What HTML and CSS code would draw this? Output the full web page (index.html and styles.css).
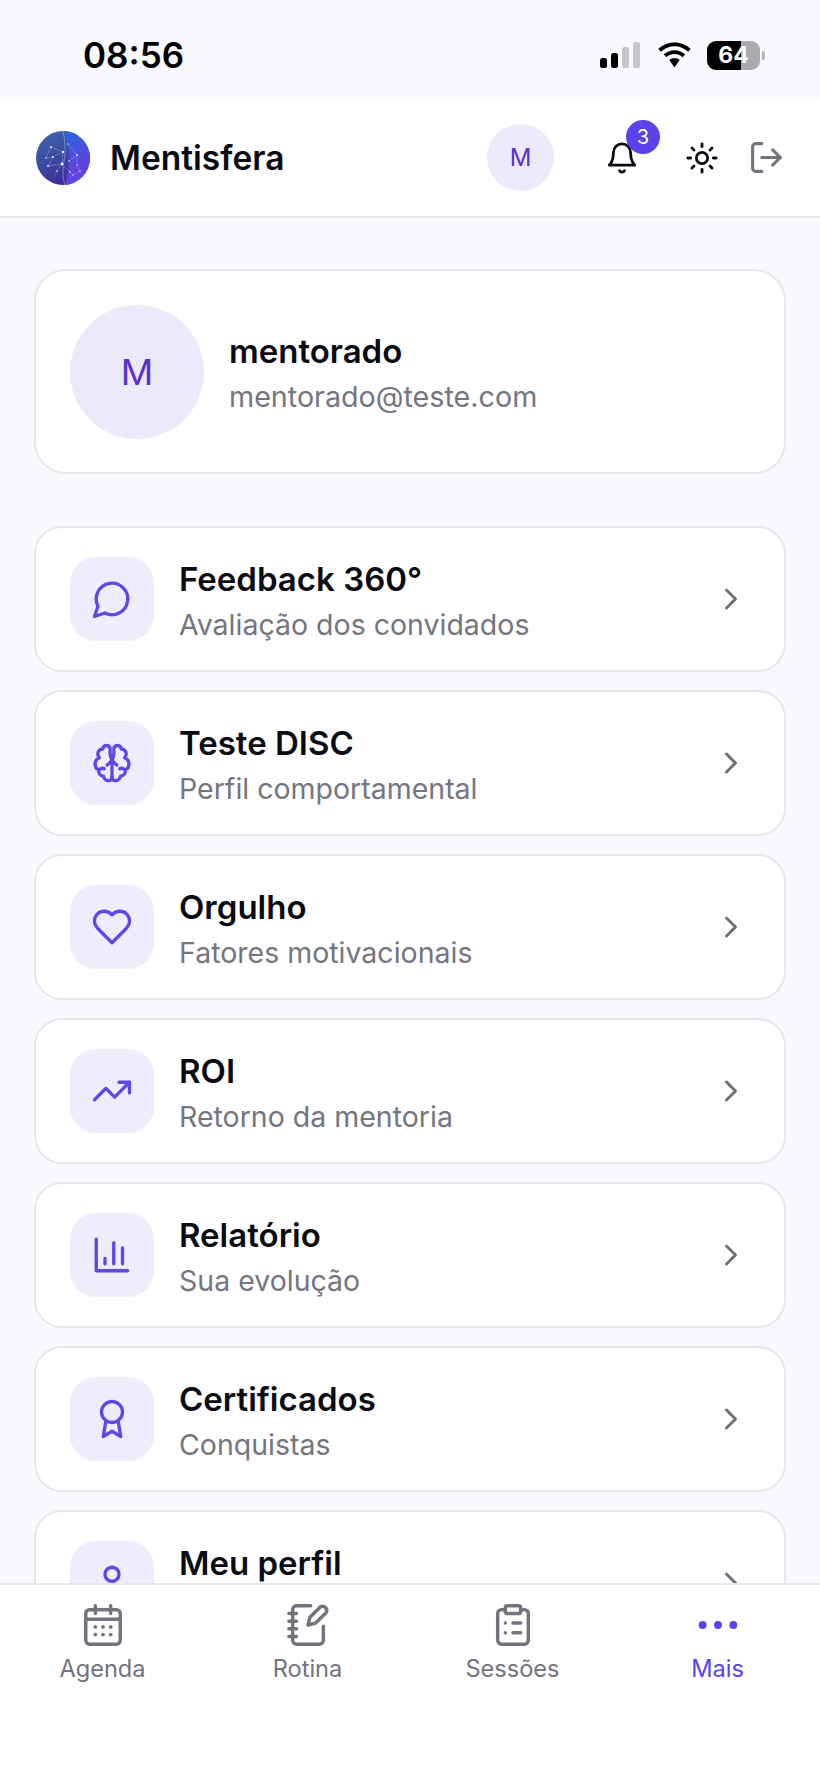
FILE: index.html
```html
<!DOCTYPE html>
<html lang="pt-BR">
<head>
<meta charset="utf-8">
<title>Mentisfera</title>
<link rel="stylesheet" href="styles.css">
</head>
<body>
<div class="app">
  <div class="status-bar">
    <span class="time">08:56</span>
    <div class="status-icons">
      <div class="signal"><i class="bar b1"></i><i class="bar b2"></i><i class="bar b3 off"></i><i class="bar b4 off"></i></div>
      <svg class="wifi" viewBox="0 0 36 26"><path d="M18 4.200c5.300 0 10 2 13.600 5.500L34.200 7C30 2.800 24.300.4 18 .4S6 2.800 1.800 7l2.600 2.700C8 6.200 12.700 4.200 18 4.200Z"/><path d="M18 12c3.100 0 5.900 1.200 8 3.200l2.700-2.700C25.900 9.800 22.100 8.200 18 8.200S10.100 9.800 7.300 12.500l2.700 2.700c2.100-2 4.900-3.200 8-3.200Z"/><path d="M18 16c-2 0-3.800.8-5.200 2.100L18 25.600l5.200-7.500C21.800 16.800 20 16 18 16Z"/></svg>
      <div class="battery"><span class="battery-level">64</span></div>
      <i class="battery-nub"></i>
    </div>
  </div>

  <header class="topbar">
    <svg class="logo" viewBox="0 0 54 54">
      <defs>
        <linearGradient id="lg1" x1="0.1" y1="0" x2="0.7" y2="1"><stop offset="0" stop-color="#4068ac"/><stop offset="0.55" stop-color="#3b44a0"/><stop offset="1" stop-color="#42209c"/></linearGradient>
        <linearGradient id="lg2" x1="0.4" y1="0" x2="0.6" y2="1"><stop offset="0" stop-color="#2c62e0"/><stop offset="0.6" stop-color="#5a45dc"/><stop offset="1" stop-color="#6e3fe0"/></linearGradient>
        <clipPath id="lc"><circle cx="27" cy="27" r="27"/></clipPath>
      </defs>
      <g clip-path="url(#lc)">
        <rect width="54" height="54" fill="url(#lg1)"/>
        <path d="M28 0C32 12 34 22 33 32C32 42 30 48 30 54H54V0Z" fill="url(#lg2)"/>
        <path d="M27 0C29 10 30 20 28 30C26 40 27 48 29 54" fill="none" stroke="#b7c4f0" stroke-width=".5"/>
        <g fill="none" stroke="#c6cff5" stroke-opacity=".65" stroke-width=".45">
          <path d="M15 16L10 27L17 26L12 35L26 33L21 40L18 46"/>
          <path d="M15 16L27 21L17 26M27 21L26 33L34 41"/>
          <path d="M32 13L41 24L41 34L44 40L37 44L34 41M41 24L33 30"/>
        </g>
        <g fill="#eef1ff">
          <circle cx="15" cy="16" r=".9"/><circle cx="10" cy="27" r=".7"/><circle cx="17" cy="26" r=".9"/><circle cx="12" cy="35" r=".9"/><circle cx="27" cy="21" r="1.200"/><circle cx="26" cy="33" r="1.400"/><circle cx="21" cy="40" r=".8"/><circle cx="32" cy="13" r=".7"/><circle cx="41" cy="24" r=".9"/><circle cx="41" cy="34" r=".7"/><circle cx="44" cy="40" r=".7"/><circle cx="37" cy="44" r=".7"/><circle cx="34" cy="41" r=".8"/><circle cx="33" cy="30" r=".8"/>
        </g>
      </g>
    </svg>
    <span class="brand">Mentisfera</span>
    <div class="avatar-small">M</div>
    <div class="bell-wrap">
      <svg class="icon-34 ink" viewBox="0 0 24 24"><path d="M6 8a6 6 0 0 1 12 0c0 7 3 9 3 9H3s3-2 3-9"/><path d="M10.300 21a1.940 1.940 0 0 0 3.400 0"/></svg>
      <span class="badge">3</span>
    </div>
    <svg class="icon-34 ink sun" viewBox="0 0 24 24"><circle cx="12" cy="12" r="4"/><path d="M12 2v2M12 20v2M4.930 4.930l1.410 1.410M17.660 17.660l1.410 1.410M2 12h2M20 12h2M6.340 17.660l-1.410 1.410M19.070 4.930l-1.410 1.410"/></svg>
    <svg class="icon-34 muted logout" viewBox="0 0 24 24"><path d="M9 21H5a2 2 0 0 1-2-2V5a2 2 0 0 1 2-2h4"/><path d="M16 17l5-5-5-5"/><path d="M21 12H9"/></svg>
  </header>

  <main class="content">
    <section class="card profile">
      <div class="avatar-large">M</div>
      <div class="profile-text">
        <div class="profile-name">mentorado</div>
        <div class="profile-mail">mentorado@teste.com</div>
      </div>
    </section>

    <nav class="menu">
      <a class="card row">
        <span class="tile"><svg class="icon-42" viewBox="0 0 24 24"><path d="M7.900 20A9 9 0 1 0 4 16.100L2 22Z"/></svg></span>
        <span class="row-text"><span class="row-title">Feedback 360°</span><span class="row-sub">Avaliação dos convidados</span></span>
        <svg class="chevron" viewBox="0 0 24 24"><path d="M9 18l6-6-6-6"/></svg>
      </a>
      <a class="card row">
        <span class="tile"><svg class="icon-42" viewBox="0 0 24 24"><path d="M12 10.500C11 8.500 10.700 6.500 11 4.500C11 3 10.300 2 9 2C7.800 2 6.900 2.800 6.700 4C5 4 3.700 5.400 3.900 7.100C4 7.900 4.300 8.600 4.800 9C3.200 9.700 2.300 11 2.300 12.500C2.300 14 3.100 15.300 4.400 15.900C4.200 17.900 5.300 19.400 7.100 19.500C7.500 21.100 8.700 22.100 10 22.100C11.300 22.100 12 21.200 12 20"/><path d="M12 10.500C13 8.500 13.300 6.500 13 4.500C13 3 13.700 2 15 2C16.200 2 17.100 2.800 17.300 4C19 4 20.300 5.400 20.100 7.100C20 7.900 19.700 8.600 19.200 9C20.800 9.700 21.700 11 21.700 12.500C21.700 14 20.900 15.300 19.600 15.900C19.800 17.900 18.700 19.400 16.900 19.500C16.500 21.100 15.300 22.100 14 22.100C12.700 22.100 12 21.200 12 20"/><path d="M12 20V10.500M12 10.500L9.200 13.200M12 10.500L14.800 13.200M5 15.700C5.700 14.900 6.700 14.800 7.500 15.300M19 15.700C18.300 14.900 17.300 14.800 16.500 15.300"/></svg></span>
        <span class="row-text"><span class="row-title">Teste DISC</span><span class="row-sub">Perfil comportamental</span></span>
        <svg class="chevron" viewBox="0 0 24 24"><path d="M9 18l6-6-6-6"/></svg>
      </a>
      <a class="card row">
        <span class="tile"><svg class="icon-42" viewBox="0 0 24 24"><path d="M19 14c1.490-1.460 3-3.210 3-5.500A5.500 5.500 0 0 0 16.500 3c-1.760 0-3 .5-4.500 2-1.500-1.500-2.740-2-4.500-2A5.500 5.500 0 0 0 2 8.500c0 2.300 1.500 4.050 3 5.500l7 7Z"/></svg></span>
        <span class="row-text"><span class="row-title">Orgulho</span><span class="row-sub">Fatores motivacionais</span></span>
        <svg class="chevron" viewBox="0 0 24 24"><path d="M9 18l6-6-6-6"/></svg>
      </a>
      <a class="card row">
        <span class="tile"><svg class="icon-42" viewBox="0 0 24 24"><path d="M2 17l6.500-6.500 5 5L22 7"/><path d="M16 7h6v6"/></svg></span>
        <span class="row-text"><span class="row-title">ROI</span><span class="row-sub">Retorno da mentoria</span></span>
        <svg class="chevron" viewBox="0 0 24 24"><path d="M9 18l6-6-6-6"/></svg>
      </a>
      <a class="card row">
        <span class="tile"><svg class="icon-42" viewBox="0 0 24 24"><path d="M3 3v18h18"/><path d="M18 17V8M13 17V5M8 17v-3"/></svg></span>
        <span class="row-text"><span class="row-title">Relatório</span><span class="row-sub">Sua evolução</span></span>
        <svg class="chevron" viewBox="0 0 24 24"><path d="M9 18l6-6-6-6"/></svg>
      </a>
      <a class="card row">
        <span class="tile"><svg class="icon-42" viewBox="0 0 24 24"><circle cx="12" cy="8" r="6"/><path d="M15.480 12.890L17 22l-5-3-5 3 1.520-9.110"/></svg></span>
        <span class="row-text"><span class="row-title">Certificados</span><span class="row-sub">Conquistas</span></span>
        <svg class="chevron" viewBox="0 0 24 24"><path d="M9 18l6-6-6-6"/></svg>
      </a>
      <a class="card row">
        <span class="tile"><svg class="icon-42" viewBox="0 0 24 24"><circle cx="12" cy="7" r="4"/><path d="M19 21v-2a4 4 0 0 0-4-4H9a4 4 0 0 0-4 4v2"/></svg></span>
        <span class="row-text title-only"><span class="row-title">Meu perfil</span></span>
        <svg class="chevron" viewBox="0 0 24 24"><path d="M9 18l6-6-6-6"/></svg>
      </a>
    </nav>
  </main>

  <footer class="tabbar">
    <a class="tab">
      <svg class="tab-icon" viewBox="0 0 24 24"><rect x="3" y="4" width="18" height="18" rx="2"/><path d="M8 2v4M16 2v4M3 9h18"/><path class="dots" d="M8 13h.01M12 13h.01M16 13h.01M8 17h.01M12 17h.01M16 17h.01"/></svg>
      <span>Agenda</span>
    </a>
    <a class="tab">
      <svg class="tab-icon" viewBox="0 0 24 24"><path d="M13.400 2H6a2 2 0 0 0-2 2v16a2 2 0 0 0 2 2h12a2 2 0 0 0 2-2v-7.400"/><path d="M2 6h4M2 10h4M2 14h4M2 18h4"/><path d="M18.400 2.600a2.170 2.170 0 0 1 3 3L16 11l-4 1 1-4Z"/></svg>
      <span>Rotina</span>
    </a>
    <a class="tab">
      <svg class="tab-icon" viewBox="0 0 24 24"><rect x="8" y="2" width="8" height="4" rx="1"/><path d="M16 4h2a2 2 0 0 1 2 2v14a2 2 0 0 1-2 2H6a2 2 0 0 1-2-2V6a2 2 0 0 1 2-2h2"/><path d="M12 11h4M12 16h4M8 11h.01M8 16h.01"/></svg>
      <span>Sessões</span>
    </a>
    <a class="tab active">
      <svg class="tab-icon" viewBox="0 0 42 42"><circle class="dot-fill" cx="7" cy="21" r="3.600"/><circle class="dot-fill" cx="21" cy="21" r="3.600"/><circle class="dot-fill" cx="35" cy="21" r="3.600"/></svg>
      <span>Mais</span>
    </a>
  </footer>
</div>
</body>
</html>
```
FILE: styles.css
```css
* { box-sizing: border-box; }
html, body { margin: 0; padding: 0; }
body {
  font-family: Inter, "Liberation Sans", sans-serif;
  background: #f8f8fd;
  color: #0b0b14;
}
.app {
  width: 820px;
  height: 1774px;
  display: flex;
  flex-direction: column;
  overflow: hidden;
}

/* status bar */
.status-bar {
  height: 99px;
  flex: none;
  display: flex;
  align-items: center;
  justify-content: space-between;
  padding: 11px 55px 0 83px;
  background: #f8f8fd;
}
.time { font-size: 35px; font-weight: 600; color: #000; line-height: 1; }
.status-icons { display: flex; align-items: center; }
.signal { display: flex; align-items: flex-end; gap: 3.500px; height: 26px; margin-right: 16px; }
.bar { display: block; width: 7.500px; border-radius: 2.500px; background: #000; }
.bar.off { background: #c6c6cb; }
.b1 { height: 10px; }
.b2 { height: 15px; }
.b3 { height: 21px; }
.b4 { height: 26px; }
.wifi { width: 37px; height: 26px; fill: #000; margin-right: 14px; }
.battery {
  width: 53px;
  height: 29px;
  border-radius: 9px;
  background: linear-gradient(90deg, #000 0 64%, #a9a9ae 64% 100%);
  display: flex;
  align-items: center;
  justify-content: center;
}
.battery-level { color: #fff; font-size: 23px; font-weight: 700; line-height: 1; }
.battery-nub { width: 3px; height: 9px; margin-left: 2px; border-radius: 0 4px 4px 0; background: #b4b4b8; }

/* header */
.topbar {
  height: 119px;
  flex: none;
  display: flex;
  align-items: center;
  padding: 0 36px;
  background: #fff;
  border-bottom: 2px solid #e6e6ec;
}
.logo { width: 54px; height: 54px; flex: none; }
.brand { font-size: 33.500px; font-weight: 600; margin-left: 20px; margin-right: auto; color: #0b0b14; }
.avatar-small {
  width: 67px;
  height: 67px;
  border-radius: 50%;
  background: #ece9fb;
  color: #5a30cf;
  display: flex;
  align-items: center;
  justify-content: center;
  font-size: 24px;
}
.bell-wrap { position: relative; margin-left: 51px; width: 34px; height: 34px; }
.badge {
  position: absolute;
  top: -21px;
  left: 21px;
  width: 34px;
  height: 34px;
  border-radius: 50%;
  background: #5b42ea;
  color: #fff;
  font-size: 20px;
  display: flex;
  align-items: center;
  justify-content: center;
}
.icon-34 { width: 34px; height: 34px; flex: none; fill: none; stroke-width: 2; stroke-linecap: round; stroke-linejoin: round; }
.ink { stroke: #0b0b14; }
.muted { stroke: #73737f; }
.sun { margin-left: 46px; }
.logout { width: 37px; height: 37px; margin-left: 29px; margin-right: -1px; }

/* content */
.content {
  flex: 1;
  min-height: 0;
  overflow: hidden;
  padding: 51px 34px 0;
  background: #f8f8fd;
}
.card {
  background: #fff;
  border: 2px solid #e6e6ec;
  display: flex;
  align-items: center;
}
.profile {
  height: 205px;
  border-radius: 32px;
  padding: 0 34px;
  gap: 25px;
  margin-bottom: 52px;
}
.profile-text { margin-top: 4px; }
.avatar-large {
  width: 134px;
  height: 134px;
  border-radius: 50%;
  background: #ece9fb;
  color: #5a30cf;
  display: flex;
  align-items: center;
  justify-content: center;
  font-size: 36px;
  flex: none;
}
.profile-name { font-size: 33px; font-weight: 600; line-height: 38px; margin-bottom: 9px; }
.profile-mail { font-size: 28.700px; line-height: 36px; color: #75757f; }

.menu { display: flex; flex-direction: column; gap: 18px; }
.row {
  height: 146px;
  flex: none;
  border-radius: 28px;
  padding: 0 34px;
  gap: 25px;
}
.tile {
  width: 84px;
  height: 84px;
  flex: none;
  border-radius: 26px;
  background: #efedfc;
  display: flex;
  align-items: center;
  justify-content: center;
}
.icon-42 { width: 42px; height: 42px; fill: none; stroke: #5f47ea; stroke-width: 1.900; stroke-linecap: round; stroke-linejoin: round; }
.row-text { flex: 1; display: flex; flex-direction: column; gap: 10px; margin-top: 3px; }
.row-text.title-only { height: 82px; }
.row-title { font-size: 33px; font-weight: 600; line-height: 38px; color: #0b0b14; }
.row-sub { font-size: 28.500px; line-height: 34px; color: #75757f; }
.chevron { width: 36px; height: 36px; flex: none; margin-right: 1px; fill: none; stroke: #6f6f7a; stroke-width: 2; stroke-linecap: round; stroke-linejoin: round; }

/* tab bar */
.tabbar {
  height: 191px;
  flex: none;
  display: grid;
  grid-template-columns: repeat(4, 1fr);
  background: #fff;
  border-top: 2px solid #e6e6ec;
  padding-top: 17px;
}
.tab {
  display: flex;
  flex-direction: column;
  align-items: center;
  gap: 7px;
  font-size: 23.600px;
  line-height: 28px;
  color: #73737f;
}
.tab-icon { width: 46px; height: 46px; fill: none; stroke: #73737f; stroke-width: 1.800; stroke-linecap: round; stroke-linejoin: round; }
.tab-icon .dots { stroke-width: 2; }
.tab.active { color: #5b42ea; }
.tab-icon .dot-fill { fill: #5b42ea; stroke: none; }
```
